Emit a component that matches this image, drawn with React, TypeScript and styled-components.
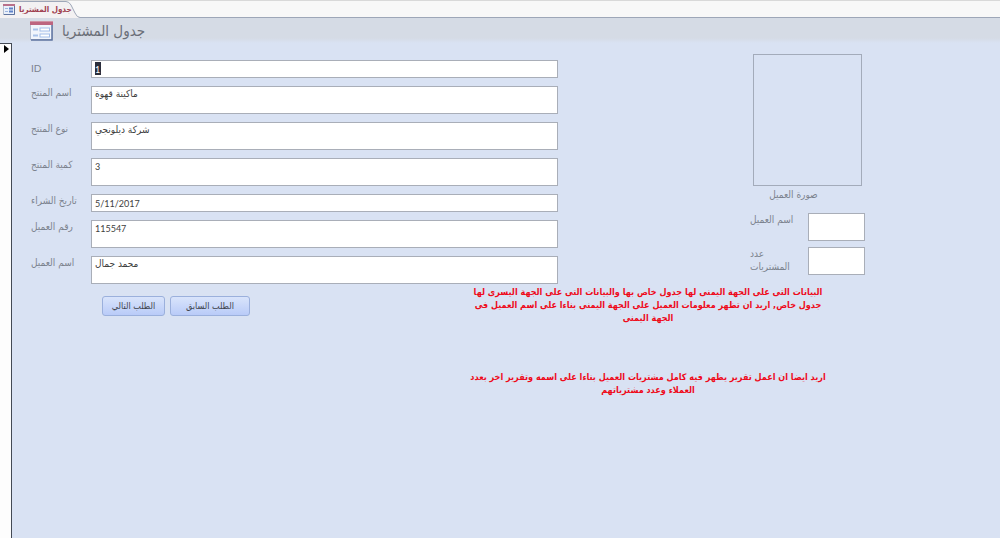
import React from "react";
import styled, { createGlobalStyle } from "styled-components";

const arabic = `"DejaVu Sans Condensed", "DejaVu Sans", sans-serif`;

const Global = createGlobalStyle`
  * { box-sizing: border-box; }
  html, body, #root { height: 100%; }
  body { margin: 0; background: #d9e2f3; font-family: ${arabic}; }
`;

const Window = styled.div`
  display: flex;
  flex-direction: column;
  min-height: 100%;
`;

const TabStrip = styled.nav`
  display: flex;
  height: 18px;
  background: #f8f8f8;
  border-top: 1px solid #d9d9d9;
  border-bottom: 1px solid #9ea7b8;
`;

const Tab = styled.a`
  position: relative;
  display: flex;
  align-items: center;
  gap: 4px;
  width: 80px;
  height: 17px;
  padding-left: 3px;
  color: #a0404f;
  font: bold 8px/14px ${arabic};
  text-decoration: none;
  white-space: nowrap;
`;

const TabShape = styled.svg`
  position: absolute;
  left: 0;
  top: 0;
`;

const TabLabel = styled.span`
  position: relative;
`;

const TabIcon = styled.svg`
  position: relative;
  flex: none;
`;

const Header = styled.header`
  display: flex;
  align-items: center;
  gap: 9px;
  height: 25px;
  padding-left: 30px;
  background: linear-gradient(#d5dbe5 80%, #d9e2f3);
`;

const Title = styled.h1`
  margin: 0;
  color: #6b6f78;
  font: normal 15px/24px ${arabic};
`;

const Body = styled.div`
  display: flex;
  flex: 1;
`;

const RecordSelector = styled.aside`
  width: 12px;
  flex: none;
  padding: 1px 0 0 4px;
  background: #fdfdfd;
  border-top: 1px solid #444a55;
  border-right: 1px solid #444a55;
`;

const Pointer = styled.svg`
  display: block;
`;

const Form = styled.form`
  flex: 1;
  min-width: 0;
`;

const Columns = styled.div`
  display: grid;
  grid-template-columns: 546fr 442fr;
  align-items: start;
`;

const FieldList = styled.div`
  display: flex;
  flex-direction: column;
  gap: 8px;
  padding: 17px 0 0 19px;
`;

const FieldRow = styled.div`
  display: grid;
  grid-template-columns: 60px 1fr;
`;

const Label = styled.label`
  color: #7c828e;
  font-size: 10px;
  line-height: 14px;
`;

const LatinLabel = styled(Label)`
  font-family: Lato, sans-serif;
  line-height: 16px;
`;

const box = `
  display: block;
  width: 100%;
  margin: 0;
  padding: 0 3px;
  border: 1px solid #a9aeb8;
  border-radius: 0;
  outline: none;
  background: #fff;
  color: #404040;
  text-align: left;
`;

const face = (latin?: boolean) =>
  latin ? `9px/16px Lato, sans-serif` : `10px/14px ${arabic}`;

const LineInput = styled.input<{ $selected?: boolean }>`
  ${box}
  height: 18px;
  font: ${face(true)};
  ${(p) =>
    p.$selected &&
    `color: #fff; background: linear-gradient(#2b2e3c, #2b2e3c) 3px 1px / 6px 13px no-repeat #fff;`}
`;

const AreaInput = styled.textarea<{ $latin?: boolean }>`
  ${box}
  height: 28px;
  overflow: hidden;
  resize: none;
  font: ${(p) => face(p.$latin)};
`;

const Customer = styled.section`
  padding: 11px 0 0 192px;
`;

const Photo = styled.figure`
  width: 109px;
  margin: 0 0 0 3px;
`;

const PhotoFrame = styled.div`
  height: 132px;
  border: 1px solid #a3abba;
`;

const Caption = styled.figcaption`
  padding: 1px 28px 0 0;
  color: #7c828e;
  font-size: 10px;
  line-height: 16px;
  text-align: center;
`;

const CustomerFields = styled.div`
  display: grid;
  grid-template-columns: 40px 57px;
  column-gap: 18px;
  row-gap: 6px;
  padding-top: 10px;
`;

const SideLabel = styled(Label)`
  line-height: 13px;
  white-space: nowrap;
`;

const Lower = styled.div`
  display: flex;
  align-items: flex-start;
`;

const Actions = styled.div`
  display: flex;
  flex: none;
  gap: 5px;
  width: 466px;
  padding: 12px 0 0 90px;
`;

const Button = styled.button<{ $wide?: boolean }>`
  width: ${(p) => (p.$wide ? 80 : 63)}px;
  height: 20px;
  padding: 0;
  border: 1px solid #9bb0dc;
  border-radius: 3px;
  background: linear-gradient(#d9e4fb, #b9cbf8);
  color: #40444e;
  font: 9px/16px ${arabic};
`;

const Notes = styled.div`
  width: 340px;
  color: #ee0a1a;
  font: bold 9px/13px ${arabic};
  text-align: center;
  white-space: nowrap;
`;

const Note = styled.p`
  display: flex;
  flex-direction: column;
  align-items: center;
  margin: 2px 0 46px;
`;

type Field = {
  id: string;
  label: string;
  value: string;
  line?: boolean;
  latin?: boolean;
};

const fields: Field[] = [
  { id: "product", label: "اسم المنتج", value: "ماكينة قهوة" },
  { id: "kind", label: "نوع المنتج", value: "شركة ديلونجي" },
  { id: "count", label: "كمية المنتج", value: "3", latin: true },
  { id: "date", label: "تاريخ الشراء", value: "5/11/2017", line: true },
  { id: "customerNo", label: "رقم العميل", value: "115547", latin: true },
  { id: "customer", label: "اسم العميل", value: "محمد جمال" },
];

const notes = [
  [
    "البيانات التى على الجهة اليمنى لها جدول خاص بها والبيانات التى على الجهة اليسرى لها",
    "جدول خاص, اريد ان تظهر معلومات العميل على الجهة اليمنى بناءا على اسم العميل فى",
    "الجهة اليمنى",
  ],
  [
    "اريد ايضا ان اعمل تقرير يظهر فيه كامل مشتريات العميل بناءا على اسمه وتقرير اخر بعدد",
    "العملاء وعدد مشترياتهم",
  ],
];

function FormGlyph() {
  return (
    <svg width="23" height="20" viewBox="0 0 23 20" aria-hidden="true">
      <rect x="0.5" y="0.5" width="22" height="18" fill="#f1f5fc" stroke="#b4bed0" />
      <rect x="0" y="0" width="23" height="4" fill="#bd6580" />
      <rect x="0" y="0" width="23" height="1" fill="#cf93a5" />
      <path d="M22 4v15H1" fill="none" stroke="#5f74a0" strokeWidth="1.5" />
      <path d="M3 8.5h5M3 14.5h5" stroke="#a9c3ea" strokeWidth="2" />
      <rect x="10" y="7" width="9.5" height="3" fill="#fff" stroke="#a3beea" />
      <rect x="10" y="13" width="9.5" height="3" fill="#fff" stroke="#a3beea" />
    </svg>
  );
}

export default function App() {
  return (
    <Window>
      <Global />
      <TabStrip>
        <Tab href="#form">
          <TabShape width="80" height="17" viewBox="0 0 80 17" aria-hidden="true">
            <path d="M0 0.5H66Q69 0.5 71 4L75 12Q77 16.5 80 16.5V17H0Z" fill="#f3f1f2" />
            <path d="M0 0.5H66Q69 0.5 71 4L75 12Q77 16.5 80 16.5" fill="none" stroke="#9ea7b8" />
          </TabShape>
          <TabIcon width="12" height="11" viewBox="0 0 12 11" aria-hidden="true">
            <rect x="0.5" y="0.5" width="11" height="10" fill="#eaf0fa" stroke="#b4bed0" />
            <rect width="12" height="2" fill="#b9708a" />
            <path d="M2 4.5h3M2 7.5h3" stroke="#9db6e0" />
            <path d="M6 4.5h4M6 7.5h4" stroke="#5f82c8" strokeWidth="2" />
            <path d="M11.5 2v8.5H1" fill="none" stroke="#5f74a0" />
          </TabIcon>
          <TabLabel dir="rtl">جدول المشتريا</TabLabel>
        </Tab>
      </TabStrip>
      <Header>
        <FormGlyph />
        <Title dir="rtl">جدول المشتريا</Title>
      </Header>
      <Body>
        <RecordSelector>
          <Pointer width="5" height="8" viewBox="0 0 5 8" aria-hidden="true">
            <path d="M0 0L5 4L0 8Z" fill="#000" />
          </Pointer>
        </RecordSelector>
        <Form id="form" onSubmit={(e) => e.preventDefault()}>
          <Columns>
            <FieldList>
              <FieldRow>
                <LatinLabel htmlFor="id">ID</LatinLabel>
                <LineInput id="id" defaultValue="1" $selected />
              </FieldRow>
              {fields.map((f) => (
                <FieldRow key={f.id}>
                  <Label htmlFor={f.id}>{f.label}</Label>
                  {f.line ? (
                    <LineInput id={f.id} defaultValue={f.value} />
                  ) : (
                    <AreaInput id={f.id} defaultValue={f.value} $latin={f.latin} />
                  )}
                </FieldRow>
              ))}
            </FieldList>
            <Customer>
              <Photo>
                <PhotoFrame />
                <Caption>صورة العميل</Caption>
              </Photo>
              <CustomerFields>
                <SideLabel htmlFor="sideName">اسم العميل</SideLabel>
                <AreaInput id="sideName" />
                <SideLabel htmlFor="sideCount">
                  عدد
                  <br />
                  المشتريات
                </SideLabel>
                <AreaInput id="sideCount" />
              </CustomerFields>
            </Customer>
          </Columns>
          <Lower>
            <Actions>
              <Button type="button">الطلب التالي</Button>
              <Button type="button" $wide>
                الطلب السابق
              </Button>
            </Actions>
            <Notes dir="rtl">
              {notes.map((lines) => (
                <Note key={lines[0]}>
                  {lines.map((line) => (
                    <span key={line}>{line}</span>
                  ))}
                </Note>
              ))}
            </Notes>
          </Lower>
        </Form>
      </Body>
    </Window>
  );
}
